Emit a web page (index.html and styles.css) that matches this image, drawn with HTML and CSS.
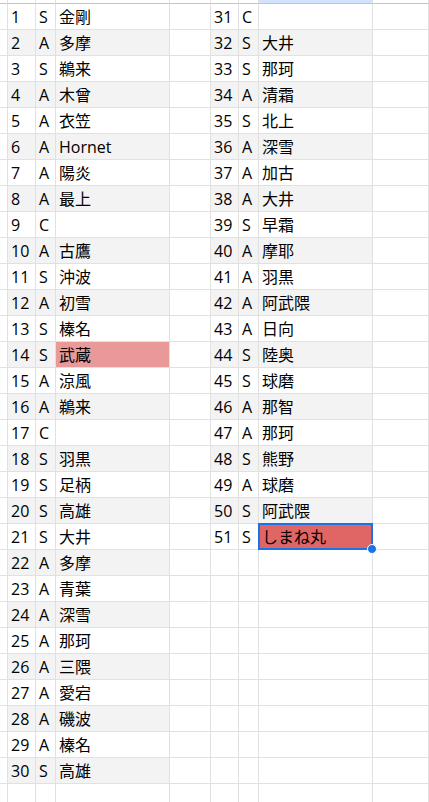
FILE: index.html
```html
<!DOCTYPE html>
<html>
<head>
<meta charset="utf-8">
<link rel="stylesheet" href="styles.css">
<title>Sheet</title>
</head>
<body>
<div class="sheet">
	<div class="row head"><span></span><span></span><span></span><span></span><span></span><span></span><span></span><span class="on"></span><span></span></div>

	<div class="row"><span class="x"></span><span class="l">1</span><span class="l">S</span><span class="l">金剛</span><span class="x"></span><span class="r">31</span><span class="r">C</span><span class="r"></span><span class="x"></span></div>
	<div class="row band"><span class="x"></span><span class="l">2</span><span class="l">A</span><span class="l">多摩</span><span class="x"></span><span class="r">32</span><span class="r">S</span><span class="r">大井</span><span class="x"></span></div>
	<div class="row"><span class="x"></span><span class="l">3</span><span class="l">S</span><span class="l">鵜来</span><span class="x"></span><span class="r">33</span><span class="r">S</span><span class="r">那珂</span><span class="x"></span></div>
	<div class="row band"><span class="x"></span><span class="l">4</span><span class="l">A</span><span class="l">木曾</span><span class="x"></span><span class="r">34</span><span class="r">A</span><span class="r">清霜</span><span class="x"></span></div>
	<div class="row"><span class="x"></span><span class="l">5</span><span class="l">A</span><span class="l">衣笠</span><span class="x"></span><span class="r">35</span><span class="r">S</span><span class="r">北上</span><span class="x"></span></div>
	<div class="row band"><span class="x"></span><span class="l">6</span><span class="l">A</span><span class="l">Hornet</span><span class="x"></span><span class="r">36</span><span class="r">A</span><span class="r">深雪</span><span class="x"></span></div>
	<div class="row"><span class="x"></span><span class="l">7</span><span class="l">A</span><span class="l">陽炎</span><span class="x"></span><span class="r">37</span><span class="r">A</span><span class="r">加古</span><span class="x"></span></div>
	<div class="row band"><span class="x"></span><span class="l">8</span><span class="l">A</span><span class="l">最上</span><span class="x"></span><span class="r">38</span><span class="r">A</span><span class="r">大井</span><span class="x"></span></div>
	<div class="row"><span class="x"></span><span class="l">9</span><span class="l">C</span><span class="l"></span><span class="x"></span><span class="r">39</span><span class="r">S</span><span class="r">早霜</span><span class="x"></span></div>
	<div class="row band"><span class="x"></span><span class="l">10</span><span class="l">A</span><span class="l">古鷹</span><span class="x"></span><span class="r">40</span><span class="r">A</span><span class="r">摩耶</span><span class="x"></span></div>
	<div class="row"><span class="x"></span><span class="l">11</span><span class="l">S</span><span class="l">沖波</span><span class="x"></span><span class="r">41</span><span class="r">A</span><span class="r">羽黒</span><span class="x"></span></div>
	<div class="row band"><span class="x"></span><span class="l">12</span><span class="l">A</span><span class="l">初雪</span><span class="x"></span><span class="r">42</span><span class="r">A</span><span class="r">阿武隈</span><span class="x"></span></div>
	<div class="row"><span class="x"></span><span class="l">13</span><span class="l">S</span><span class="l">榛名</span><span class="x"></span><span class="r">43</span><span class="r">A</span><span class="r">日向</span><span class="x"></span></div>
	<div class="row band"><span class="x"></span><span class="l">14</span><span class="l">S</span><span class="l pink">武蔵</span><span class="x"></span><span class="r">44</span><span class="r">S</span><span class="r">陸奥</span><span class="x"></span></div>
	<div class="row"><span class="x"></span><span class="l">15</span><span class="l">A</span><span class="l">涼風</span><span class="x"></span><span class="r">45</span><span class="r">S</span><span class="r">球磨</span><span class="x"></span></div>
	<div class="row band"><span class="x"></span><span class="l">16</span><span class="l">A</span><span class="l">鵜来</span><span class="x"></span><span class="r">46</span><span class="r">A</span><span class="r">那智</span><span class="x"></span></div>
	<div class="row"><span class="x"></span><span class="l">17</span><span class="l">C</span><span class="l"></span><span class="x"></span><span class="r">47</span><span class="r">A</span><span class="r">那珂</span><span class="x"></span></div>
	<div class="row band"><span class="x"></span><span class="l">18</span><span class="l">S</span><span class="l">羽黒</span><span class="x"></span><span class="r">48</span><span class="r">S</span><span class="r">熊野</span><span class="x"></span></div>
	<div class="row"><span class="x"></span><span class="l">19</span><span class="l">S</span><span class="l">足柄</span><span class="x"></span><span class="r">49</span><span class="r">A</span><span class="r">球磨</span><span class="x"></span></div>
	<div class="row band"><span class="x"></span><span class="l">20</span><span class="l">S</span><span class="l">高雄</span><span class="x"></span><span class="r">50</span><span class="r">S</span><span class="r">阿武隈</span><span class="x"></span></div>
	<div class="row"><span class="x"></span><span class="l">21</span><span class="l">S</span><span class="l">大井</span><span class="x"></span><span class="r">51</span><span class="r">S</span><span class="r red sel">しまね丸<i class="frame"><b class="handle"></b></i></span><span class="x"></span></div>
	<div class="row band-l"><span class="x"></span><span class="l">22</span><span class="l">A</span><span class="l">多摩</span><span class="x"></span><span class="r"></span><span class="r"></span><span class="r"></span><span class="x"></span></div>
	<div class="row"><span class="x"></span><span class="l">23</span><span class="l">A</span><span class="l">青葉</span><span class="x"></span><span class="r"></span><span class="r"></span><span class="r"></span><span class="x"></span></div>
	<div class="row band-l"><span class="x"></span><span class="l">24</span><span class="l">A</span><span class="l">深雪</span><span class="x"></span><span class="r"></span><span class="r"></span><span class="r"></span><span class="x"></span></div>
	<div class="row"><span class="x"></span><span class="l">25</span><span class="l">A</span><span class="l">那珂</span><span class="x"></span><span class="r"></span><span class="r"></span><span class="r"></span><span class="x"></span></div>
	<div class="row band-l"><span class="x"></span><span class="l">26</span><span class="l">A</span><span class="l">三隈</span><span class="x"></span><span class="r"></span><span class="r"></span><span class="r"></span><span class="x"></span></div>
	<div class="row"><span class="x"></span><span class="l">27</span><span class="l">A</span><span class="l">愛宕</span><span class="x"></span><span class="r"></span><span class="r"></span><span class="r"></span><span class="x"></span></div>
	<div class="row band-l"><span class="x"></span><span class="l">28</span><span class="l">A</span><span class="l">磯波</span><span class="x"></span><span class="r"></span><span class="r"></span><span class="r"></span><span class="x"></span></div>
	<div class="row"><span class="x"></span><span class="l">29</span><span class="l">A</span><span class="l">榛名</span><span class="x"></span><span class="r"></span><span class="r"></span><span class="r"></span><span class="x"></span></div>
	<div class="row band-l"><span class="x"></span><span class="l">30</span><span class="l">S</span><span class="l">高雄</span><span class="x"></span><span class="r"></span><span class="r"></span><span class="r"></span><span class="x"></span></div>
	<div class="row"><span class="x"></span><span class="l"></span><span class="l"></span><span class="l"></span><span class="x"></span><span class="r"></span><span class="r"></span><span class="r"></span><span class="x"></span></div>
</div>
</body>
</html>
```

FILE: styles.css
```css
* {
	box-sizing: border-box;
}

html, body {
	margin: 0;
	height: 100%;
	overflow: hidden;
	background: #fff;
}

.sheet {
	width: 429px;
	font-family: "Open Sans", "Noto Sans CJK JP", sans-serif;
	font-size: 16px;
	color: #000;
}

.row {
	display: grid;
	grid-template-columns: 8px 28px 20px 114px 41px 28px 20px 114px 1fr;
	height: 26px;
}

.row > span {
	position: relative;
	border-right: 1px solid #e1e1e1;
	border-bottom: 1px solid #e1e1e1;
	padding: 1px 0 0 3px;
	line-height: 24px;
	white-space: nowrap;
}

/* column header strip */
.row.head {
	height: 4px;
}

.row.head > span {
	padding: 0;
	border-bottom-color: #c4c4c4;
}

.row.head > span.on {
	background: #d3e3fd;
}

/* banded rows */
.band .l,
.band .r,
.band-l .l {
	background: #f3f3f3;
}

.band .l.pink {
	background: #ea9999;
}

.row .red {
	background: #e06666;
}

/* selected cell */
.row > span.sel {
	z-index: 2;
}

.frame {
	position: absolute;
	top: -1px;
	left: -1px;
	right: -1px;
	bottom: -1px;
	border: 2px solid #1a73e8;
}

.handle {
	position: absolute;
	right: -6px;
	bottom: -6px;
	width: 10px;
	height: 10px;
	border-radius: 50%;
	background: #1a73e8;
	border: 1px solid #fff;
}
```
